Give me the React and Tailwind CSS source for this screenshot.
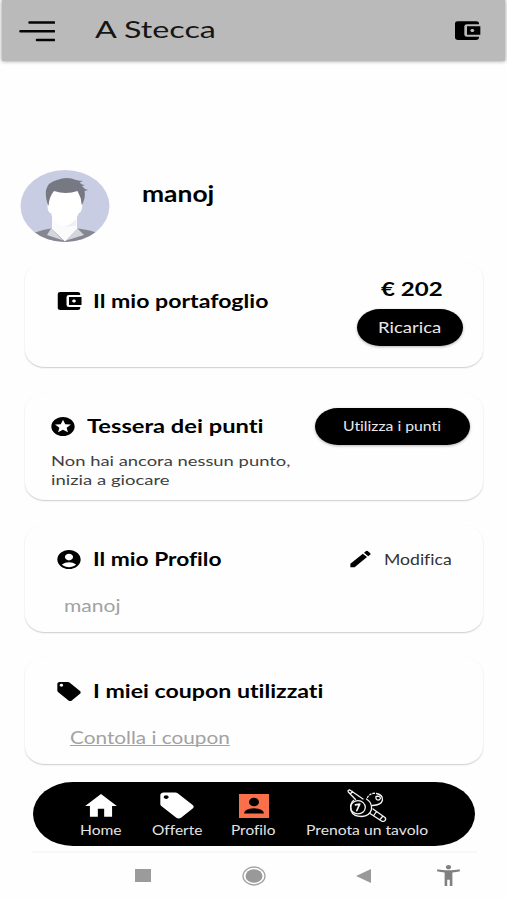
import React, { useLayoutEffect, useRef, useState } from 'react';
import {
  MdAccountBalanceWallet,
  MdStars,
  MdAccountCircle,
  MdEdit,
  MdLocalOffer,
  MdHome,
  MdAccessibilityNew,
} from 'react-icons/md';

// Stretches a single line of text to the width of its box
const FitText = ({ className, textClass = '', children }) => {
  const boxRef = useRef(null);
  const textRef = useRef(null);
  const [scale, setScale] = useState(1);

  useLayoutEffect(() => {
    setScale(boxRef.current.clientWidth / textRef.current.offsetWidth);
  }, [children]);

  return (
    <span ref={boxRef} className={`block shrink-0 whitespace-nowrap ${className}`}>
      <span
        ref={textRef}
        className={`inline-block origin-left ${textClass}`}
        style={{ transform: `scaleX(${scale})` }}
      >
        {children}
      </span>
    </span>
  );
};

const Card = ({ className, children }) => (
  <section
    className={`mx-auto w-[458px] rounded-[20px/17px] bg-[#fefefe] shadow-[0_1px_1.5px_rgba(0,0,0,0.2)] ${className}`}
  >
    {children}
  </section>
);

const Avatar = () => (
  <svg viewBox="0 0 90 72" className="h-[72px] w-[90px] shrink-0">
    <defs>
      <clipPath id="avatar">
        <ellipse cx="45" cy="36" rx="44.5" ry="36" />
      </clipPath>
    </defs>
    <g clipPath="url(#avatar)">
      <rect width="90" height="72" fill="#c8cde3" />
      <path d="M10 65Q16 61 31 58.500L45 71L58 58.500Q72 60 80 64V72H10z" fill="#85868f" />
      <path d="M32 45H57V59L45 71.500L32 59z" fill="#fbfbfe" />
      <path d="M38 57Q47 58 56 50V55Q49 57 38 57z" fill="#eceef6" />
      <path d="M31 58.500L43.500 70.500L27 65z" fill="#d5d6dc" />
      <path d="M57.500 58.500L46 70.500L64 65z" fill="#d5d6dc" />
      <path d="M29 20H61V34Q63 34 62 38Q61 43 59 43Q56 50 50 54Q45 58 39 54Q32 50 31 43Q28 43 27.500 37Q27.500 34 29 34z" fill="#fff" />
      <path d="M28.500 36Q25 28 26 20Q28 12 37 10Q47 6 56 10Q60 11 63 11L59.500 12.500Q62 15 65 15L62 16Q64 19 68 20L64.500 21Q66 27 62 35Q61 27 57.500 21Q46 25 34 21Q29 27 28.500 36z" fill="#777982" />
    </g>
  </svg>
);

const MenuIcon = () => (
  <svg viewBox="0 0 36 22" className="h-[22px] w-9" fill="none" stroke="#050505" strokeWidth="2.6" strokeLinecap="round">
    <path d="M10.500 2.500H35M1.500 11.300H35M18 20H35" />
  </svg>
);

const ProfileIcon = () => (
  <svg viewBox="0 0 30 24" className="h-6 w-[30px]">
    <rect width="30" height="24" fill="#f9704a" />
    <ellipse cx="15" cy="8" rx="5" ry="4.300" />
    <path d="M5 19.500Q5.500 14.500 15 14.300Q24.500 14.500 25 19.500z" />
  </svg>
);

// Crossed cues with two billiard balls
const BilliardIcon = () => (
  <svg viewBox="0 0 40 33" className="h-[33px] w-10" fill="none" stroke="#f4f4f4" strokeWidth="1.3" strokeLinecap="round" strokeLinejoin="round">
    <path d="M2.500 .8Q.4 1.300 1.300 3L8.500 10.500M2.500 .8L16 10M5.500 2.500L3.500 4.800" />
    <path d="M19.500 10Q25.500 14 24.500 20.500Q22.500 27 15 27.500Q6 27.500 4 21.500Q2.500 15 6.500 11.500" />
    <ellipse cx="11" cy="18.300" rx="7.300" ry="6.600" />
    <path d="M8.500 15.800L12.800 15L9.800 21.500" strokeWidth="1.700" />
    <path d="M20.500 8.500Q22.500 4.500 28 4.200" strokeDasharray="1.500 2" />
    <path d="M29.500 4.500Q36 6 35.500 11Q34.500 16 25.500 16.500" />
    <path d="M29 7.500Q33 6.500 33.500 9.500Q32 12 29.500 10.500Q28.500 9 29 7.500z" />
    <path d="M26 20L38 28.500Q39.500 30.500 37.500 32Q36 33 34.500 32L23 24.500M29.500 22.500L26.800 26.500M35.500 27.500L33 30.500" />
  </svg>
);

const NavItem = ({ icon, label, width, className }) => (
  <div className={`flex flex-col items-center ${className}`}>
    <div className="flex h-10 items-center justify-center">{icon}</div>
    <FitText className={`-mt-1 text-[13px] leading-4 text-[#e4e4e4] ${width}`}>{label}</FitText>
  </div>
);

const App = () => {
  return (
    <div className="h-[900px] w-[507px] overflow-hidden bg-[#fefefe] font-['Lato','Open_Sans',sans-serif] text-black [font-variant-ligatures:none]">
      {/* Header */}
      <header className="mx-0.5 flex h-[61px] items-center bg-[#bababa] pl-[17px] pr-[22px] shadow-[0_0_4px_rgba(0,0,0,0.45)]">
        <MenuIcon />
        <FitText className="-mt-[3px] ml-[40px] w-[121px] text-[24px] leading-8 text-[#151515]">A Stecca</FitText>
        <MdAccountBalanceWallet preserveAspectRatio="none" className="ml-auto h-[25px] w-8" />
      </header>

      {/* User */}
      <div className="mt-[109px] flex h-[72px] pl-5">
        <Avatar />
        <FitText className="ml-8 mt-[9px] w-[72px] text-[22px] font-bold leading-[30px]">manoj</FitText>
      </div>

      {/* Wallet */}
      <Card className="mt-[20px] flex h-[105px] justify-between pl-[29px] pr-5">
        <div className="flex h-[78px] items-center">
          <MdAccountBalanceWallet preserveAspectRatio="none" className="h-[24px] w-[30px]" />
          <FitText className="ml-[9px] w-[175px] text-[19px] font-bold leading-6">Il mio portafoglio</FitText>
        </div>
        <div className="flex flex-col items-center pt-[15px]">
          <FitText className="ml-[5px] w-[62px] text-[19px] font-bold leading-6">€ 202</FitText>
          <button className="mt-2 flex h-[37px] w-[106px] items-center justify-center rounded-[23px/18.5px] bg-black shadow-[0_1px_3px_rgba(0,0,0,0.3)]">
            <FitText className="-mt-0.5 w-[63px] text-left text-[15px] leading-5 text-[#e8e8e8]">Ricarica</FitText>
          </button>
        </div>
      </Card>

      {/* Points card */}
      <Card className="mt-[26px] h-[107px] pl-6 pr-[13px] pt-[15px]">
        <div className="flex h-[37px] items-center">
          <MdStars preserveAspectRatio="none" className="h-[23px] w-[28px]" />
          <FitText className="-mt-0.5 ml-[10px] w-[176px] text-[19.5px] font-bold leading-6">Tessera dei punti</FitText>
          <button className="ml-auto flex h-[37px] w-[155px] items-center justify-center rounded-[23px/18.5px] bg-black shadow-[0_1px_3px_rgba(0,0,0,0.3)]">
            <FitText className="-mt-px w-[98px] text-left text-[13.5px] leading-5 text-[#e8e8e8]">Utilizza i punti</FitText>
          </button>
        </div>
        <div className="pl-0.5 pt-[6px] text-[14px] leading-[19px] text-[#404040]">
          <FitText className="w-[239px]">Non hai ancora nessun punto,</FitText>
          <FitText className="w-[119px]">inizia a giocare</FitText>
        </div>
      </Card>

      {/* Profile */}
      <Card className="mt-[25px] h-[107px] pl-[30px] pr-[31px] pt-[22px]">
        <div className="flex h-6 items-center">
          <MdAccountCircle preserveAspectRatio="none" className="h-[23px] w-[28px]" />
          <FitText className="ml-[10px] w-[128px] text-[19px] font-bold leading-6">Il mio Profilo</FitText>
          <MdEdit preserveAspectRatio="none" className="ml-auto h-[22px] w-[27px]" />
          <FitText className="ml-[10px] w-[68px] text-[15px] leading-6 text-[#333]">Modifica</FitText>
        </div>
        <FitText className="ml-[9px] mt-[23px] w-[57px] text-[17px] leading-6 text-[#a2a2a2]">manoj</FitText>
      </Card>

      {/* Coupons */}
      <Card className="mt-[25px] h-[107px] pl-[30px] pt-[22px]">
        <div className="flex h-6 items-center">
          <MdLocalOffer preserveAspectRatio="none" className="h-[23px] w-[28px]" />
          <FitText className="ml-[10px] w-[230px] text-[19px] font-bold leading-6">I miei coupon utilizzati</FitText>
        </div>
        <FitText
          className="ml-[15px] mt-[23px] w-[160px] text-[17px] leading-6 text-[#a2a2a2]"
          textClass="underline decoration-1 underline-offset-1 [text-decoration-skip-ink:none]"
        >
          Contolla i coupon
        </FitText>
      </Card>

      {/* Bottom navigation */}
      <nav className="ml-[33px] mt-[18px] flex h-16 w-[442px] rounded-[40px/32px] bg-black pl-[29px] pt-[3.5px]">
        <NavItem
          label="Home"
          width="w-[42px]"
          className="w-[77px]"
          icon={<MdHome preserveAspectRatio="none" className="h-[32px] w-[38px] text-white" />}
        />
        <NavItem
          label="Offerte"
          width="w-[50px]"
          className="w-[75px]"
          icon={<MdLocalOffer preserveAspectRatio="none" className="h-[31px] w-[40px] text-white" />}
        />
        <NavItem label="Profilo" width="w-[45px]" className="w-[79px]" icon={<ProfileIcon />} />
        <NavItem label="Prenota un tavolo" width="w-[122px]" className="w-[147px]" icon={<BilliardIcon />} />
      </nav>

      {/* System bar */}
      <div className="ml-8 mt-[5px] h-[2px] w-[445px] bg-[#f7f7f7]" />
      <div className="flex h-[45px] items-center pl-[135px] text-[#9b9b9b]">
        <div className="h-[13px] w-4 bg-[#9b9b9b]" />
        <svg viewBox="0 0 24 20" className="ml-[91px] h-5 w-6">
          <ellipse cx="12" cy="10" rx="11" ry="9" fill="none" stroke="#a3a3a3" strokeWidth="1.3" />
          <ellipse cx="12" cy="10" rx="8.5" ry="6.800" fill="#999" />
        </svg>
        <svg viewBox="0 0 15 14" className="ml-[90px] h-[14px] w-[15px]">
          <path d="M0 7L15 0V14z" fill="#999" />
        </svg>
        <MdAccessibilityNew preserveAspectRatio="none" className="ml-[62px] h-[25px] w-[31px] text-[#808080]" />
      </div>
    </div>
  );
};

export default App;
